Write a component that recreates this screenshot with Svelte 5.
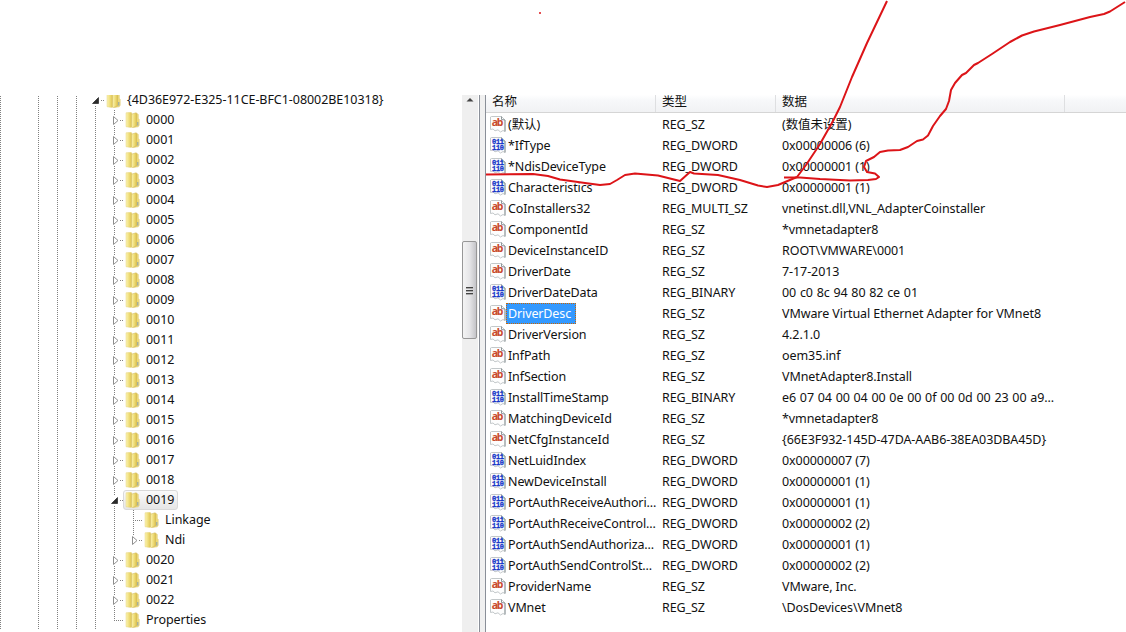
<script>
    const pad = (n) => String(n).padStart(4, "0");
    const child = (n) => ({ label: pad(n), depth: 6, kind: "closed" });

    const tree = [
        { label: "{4D36E972-E325-11CE-BFC1-08002BE10318}", depth: 5, kind: "open", root: true },
        ...Array.from({ length: 19 }, (_, i) => child(i)),
        { label: "0019", depth: 6, kind: "open", selected: true },
        { label: "Linkage", depth: 7, kind: "leaf" },
        { label: "Ndi", depth: 7, kind: "closed", last: true },
        child(20),
        child(21),
        child(22),
        { label: "Properties", depth: 6, kind: "leaf", last: true }
    ];

    const values = [
        ["(默认)", "REG_SZ", "(数值未设置)"],
        ["*IfType", "REG_DWORD", "0x00000006 (6)"],
        ["*NdisDeviceType", "REG_DWORD", "0x00000001 (1)"],
        ["Characteristics", "REG_DWORD", "0x00000001 (1)"],
        ["CoInstallers32", "REG_MULTI_SZ", "vnetinst.dll,VNL_AdapterCoinstaller"],
        ["ComponentId", "REG_SZ", "*vmnetadapter8"],
        ["DeviceInstanceID", "REG_SZ", "ROOT\\VMWARE\\0001"],
        ["DriverDate", "REG_SZ", "7-17-2013"],
        ["DriverDateData", "REG_BINARY", "00 c0 8c 94 80 82 ce 01"],
        ["DriverDesc", "REG_SZ", "VMware Virtual Ethernet Adapter for VMnet8"],
        ["DriverVersion", "REG_SZ", "4.2.1.0"],
        ["InfPath", "REG_SZ", "oem35.inf"],
        ["InfSection", "REG_SZ", "VMnetAdapter8.Install"],
        ["InstallTimeStamp", "REG_BINARY", "e6 07 04 00 04 00 0e 00 0f 00 0d 00 23 00 a9..."],
        ["MatchingDeviceId", "REG_SZ", "*vmnetadapter8"],
        ["NetCfgInstanceId", "REG_SZ", "{66E3F932-145D-47DA-AAB6-38EA03DBA45D}"],
        ["NetLuidIndex", "REG_DWORD", "0x00000007 (7)"],
        ["NewDeviceInstall", "REG_DWORD", "0x00000001 (1)"],
        ["PortAuthReceiveAuthori...", "REG_DWORD", "0x00000001 (1)"],
        ["PortAuthReceiveControl...", "REG_DWORD", "0x00000002 (2)"],
        ["PortAuthSendAuthoriza...", "REG_DWORD", "0x00000001 (1)"],
        ["PortAuthSendControlSt...", "REG_DWORD", "0x00000002 (2)"],
        ["ProviderName", "REG_SZ", "VMware, Inc."],
        ["VMnet", "REG_SZ", "\\DosDevices\\VMnet8"]
    ];

    let selected = $state("DriverDesc");

    const isBinary = (type) => type == "REG_DWORD" || type == "REG_BINARY";
</script>

<svg width="0" height="0" class="defs">
    <defs>
        <linearGradient id="flap" x1="0" x2="1">
            <stop offset="0" stop-color="#fbf3b4" />
            <stop offset="0.5" stop-color="#f0df7c" />
            <stop offset="1" stop-color="#dcc04e" />
        </linearGradient>
    </defs>
</svg>

<div class="regedit">
    <div class="tree">
        {#each tree as node}
            <div class="node">
                {#each Array(node.depth) as _, i}
                    <span class="guide" class:line={i != 1}></span>
                {/each}
                <svg class="toggle" width="19" height="20">
                    {#if !node.root}
                        <path class="dots" d={node.kind == "leaf" ? "M10.5 0V10" : "M10.5 0V5"} />
                    {/if}
                    {#if !node.last}
                        <path class="dots" d={node.kind == "leaf" ? "M10.5 10V20" : "M10.5 16V20"} />
                    {/if}
                    {#if node.kind == "open"}
                        <path d="M13.5 7.5v6h-6z" fill="#2b2b2b" stroke="#111" stroke-width=".6" />
                    {:else if node.kind == "closed"}
                        <path d="M9.5 6.5v8l4.5-4z" fill="#fff" stroke="#8f8f8f" />
                    {/if}
                    <path class="dots" d={node.kind == "leaf" ? "M10 10.5H19" : "M16 10.5H19"} />
                </svg>
                <span class="key" class:selected={node.selected}>
                    <svg class="folder" width="15" height="16">
                        <path d="M8.500 2.5l4-.7.8.6v4l.9.8v6l-1 1.6-4.700.6z" fill="#f0dd80" stroke="#d8c268" stroke-width=".5" />
                        <path d="M1 .8l5-.5.8.7v14l-1.200.5-4.600-.8z" fill="url(#flap)" stroke="#e6d585" stroke-width=".5" />
                        <path d="M6.600 2.2l4.500-1.500.6.5v12.600l-4.500 1.900-.8-.7z" fill="url(#flap)" stroke="#cdb250" stroke-width=".5" />
                        <path d="M12.800 10v3.600" stroke="#879fae" />
                    </svg>
                    <span class="label">{node.label}</span>
                </span>
            </div>
        {/each}
    </div>

    <div class="scrollbar">
        <svg class="up" width="16" height="10">
            <path d="M4.500 6.500L8 3l3.500 3.500z" fill="#444" />
        </svg>
        <div class="thumb">
            <i></i><i></i><i></i>
        </div>
    </div>
    <div class="splitter"></div>

    <div class="list">
        <div class="header">
            <span>名称</span>
            <span>类型</span>
            <span>数据</span>
            <span></span>
        </div>
        {#each values as [name, type, data]}
            <div class="row">
                <span class="name">
                    <svg class="icon" width="16" height="17">
                        <path d="M1.500 .5H11.500L15 4V15.500L13 14.500L10.500 16L8 13.800L5 14.800L3 13L.5 13.500V1z" fill="#fdfdfd" stroke="#c3c8ca" />
                        <path d="M11.500 .5V3.500L15 4V15.500" fill="none" stroke="#8d9699" />
                        {#if isBinary(type)}
                            <text class="bits" x="2" y="6.500" textLength="12">011</text>
                            <text class="bits" x="2" y="12.500" textLength="12">110</text>
                        {:else}
                            <text class="ab" x="1.800" y="10" textLength="11.500">ab</text>
                        {/if}
                    </svg>
                    <button class:selected={selected == name} onclick={() => (selected = name)}>{name}</button>
                </span>
                <span class="type">{type}</span>
                <span class="data" class:hex={type == "REG_BINARY"}>{data}</span>
            </div>
        {/each}
    </div>
</div>

<!-- freehand pen marks over the window -->
<svg class="ink" width="1126" height="632" viewBox="0 0 1126 632">
    <path d="M486 174.500L533 174L548 176L560 179.500L585 183L600 185L610 184L617 180L625 175L635 173.500L658 175.500L680 181L690 172L694 173.500L718 175L740 180L758 185.500L767 187L778 185L797 177L806 165L820 144L833 121L840 107L852 77L867 43L887 1" />
    <path d="M784 177.500L800 177.500L820 179L850 180.500L868 180L876 179L879 177L875 173.500L867 172L864 167L866 161L874 157L880 152L888 150.500L900 150L908 147L917 141L923 139.500L928 135.500L933 126L940 116L946 109L949 101L951 90L955 83L962 75L966 73L974 65L978 63L992 54L1010 42L1022 35.500L1034 31.500L1060 25L1090 17L1104 14L1110 11.500L1125 2" />
    <circle cx="540" cy="13" r="1" />
</svg>

<style>
    :global(body) {
        background: #fff;
        overflow: hidden;
    }

    .defs {
        position: absolute;
    }

    .regedit {
        display: flex;
        box-sizing: border-box;
        height: 632px;
        padding-top: 95px;
        font-family: "Noto Sans", "Noto Sans CJK SC", sans-serif;
        font-size: 12.5px;
        color: #111;
        white-space: nowrap;
    }

    .tree {
        width: 462px;
        height: 537px;
        overflow: hidden;
        flex: none;
    }

    .node {
        display: flex;
        height: 20px;
        margin-left: -10px;
    }
    .node:first-child {
        margin-top: -5px;
    }

    .guide {
        width: 19px;
        flex: none;
    }
    .line {
        background: repeating-linear-gradient(#808080 0 1px, #fff 1px 2px) 10px 0 / 1px 100% no-repeat;
    }

    .toggle {
        flex: none;
    }
    .dots {
        fill: none;
        stroke: #808080;
        stroke-dasharray: 1 1;
    }

    .key {
        display: flex;
        align-items: center;
        box-sizing: border-box;
        height: 20px;
        padding: 0 3px 0 1px;
        border: 1px solid transparent;
        border-radius: 3px;
    }
    .key.selected {
        border-color: #d9d9d9;
        background: linear-gradient(#fafafa, #e6e6e6);
    }
    .folder {
        margin-right: 6px;
        flex: none;
    }
    .label {
        line-height: 18px;
        letter-spacing: -0.05px;
    }

    .scrollbar {
        width: 16px;
        background: #efefef;
        flex: none;
    }
    .up {
        display: block;
    }
    .thumb {
        display: flex;
        flex-direction: column;
        align-items: center;
        justify-content: center;
        gap: 2px;
        box-sizing: border-box;
        width: 15px;
        height: 98px;
        margin-top: 136px;
        border: 1px solid #979797;
        border-radius: 2px;
        background: linear-gradient(to right, #f4f4f4, #e6e6e8 50%, #c4c4c8);
    }
    .thumb i {
        width: 7px;
        height: 1px;
        background: #444;
        box-shadow: 0 1px #aaa;
    }

    .splitter {
        box-sizing: border-box;
        width: 7px;
        border: solid #8a8f98;
        border-width: 0 1px;
        margin-left: 1px;
        background: #f0f0f0;
        flex: none;
    }

    .list {
        flex: 1;
        overflow: hidden;
    }
    .header,
    .row {
        display: grid;
        grid-template-columns: 170px 120px 289px 1fr;
    }
    .header {
        box-sizing: border-box;
        height: 18px;
        margin-bottom: 1px;
        border-bottom: 1px solid #d5d5d5;
        background: linear-gradient(#fff, #f7f8fa 30%, #f1f2f4);
        line-height: 14px;
    }
    .header span {
        padding-left: 6px;
        border-right: 1px solid #dedfe1;
    }
    .header span:last-child {
        border: none;
    }

    .row {
        height: 21px;
        line-height: 21px;
        letter-spacing: -0.08px;
    }
    .name {
        display: flex;
        padding-left: 4px;
    }
    .icon {
        margin-top: 2px;
        flex: none;
    }
    .name button {
        height: 21px;
        padding: 0 5px 0 2px;
        border: none;
        background: none;
        color: inherit;
        font: inherit;
        letter-spacing: -0.12px;
        line-height: 21px;
    }
    .name button.selected {
        background: #3399ff;
        color: #fff;
        outline: 1px dotted #cc6600;
        outline-offset: -1px;
    }
    .type,
    .data {
        padding-left: 6px;
    }
    .hex {
        word-spacing: 0.6px;
    }

    .ab {
        font: bold 10.5px "Noto Sans", sans-serif;
        letter-spacing: 0;
        fill: #c94a2e;
    }
    .bits {
        font: bold 7px "Liberation Mono", monospace;
        letter-spacing: 0;
        fill: #1436c8;
        stroke: #1436c8;
        stroke-width: 0.3;
    }

    .ink {
        position: absolute;
        top: 0;
        left: 0;
        pointer-events: none;
        fill: none;
        stroke: #dc1418;
        stroke-width: 2;
        stroke-linejoin: round;
    }
    .ink circle {
        fill: #dc1418;
        stroke: none;
    }
</style>
